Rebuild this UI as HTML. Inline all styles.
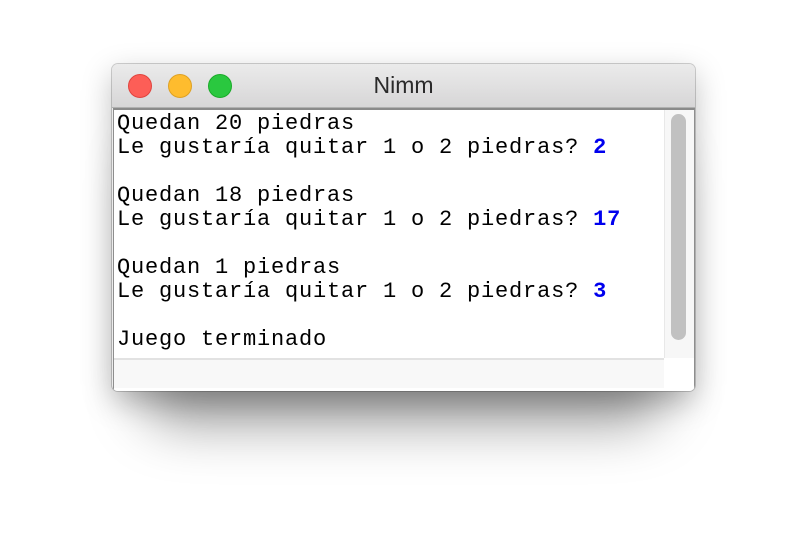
<!DOCTYPE html>
<html><head><style>
html,body{margin:0;padding:0;width:808px;height:552px;background:#fff;overflow:hidden}
.sh{position:absolute;left:150px;top:120px;width:507px;height:268px;border-radius:30px;box-shadow:0 28px 55px 8px rgba(0,0,0,.38);background:#888}
.win{position:absolute;left:112px;top:64px;width:583px;height:327px;border-radius:6px;background:#ececec;box-shadow:0 0 0 1px rgba(0,0,0,.18),0 10px 30px rgba(0,0,0,.25);overflow:hidden}
.tb{position:absolute;left:0;top:0;width:583px;height:43px;background:linear-gradient(#ebebeb,#d7d6d7);border-bottom:1px solid #b0b0b0}
.dot{position:absolute;top:10px;width:22px;height:22px;border-radius:50%}
.title{position:absolute;left:0;right:0;top:8px;text-align:center;font:23px "Liberation Sans",sans-serif;color:#2a2a2a}
.frame{position:absolute;left:1px;top:44px;width:580px;height:281px;background:#fff;border:1px solid #8e8e8e;border-top:2px solid #8a8a8a}
.txt{position:absolute;left:3px;top:2px;font:22px/24px "Liberation Mono",monospace;letter-spacing:0.8px;color:#000;white-space:pre}
.b{color:#0000ee;font-weight:bold}
.track{position:absolute;left:550px;top:0;width:29px;height:248px;background:#f7f7f7;border-left:1px solid #e8e8e8}
.thumb{position:absolute;left:6px;top:4px;width:15px;height:226px;border-radius:8px;background:#c1c1c1}
.hl{position:absolute;left:0;top:248px;width:550px;height:2px;background:#e2e2e2}
.bot{position:absolute;left:0;top:250px;width:550px;height:28px;background:#f8f8f8}
</style></head><body>
<div class="sh"></div>
<div class="win">
<div class="tb">
<div class="dot" style="left:16px;background:#fd5e57;border:1px solid #e0443e"></div>
<div class="dot" style="left:56px;background:#febc2e;border:1px solid #dea123"></div>
<div class="dot" style="left:96px;background:#2ac83f;border:1px solid #1aab29"></div>
<div class="title">Nimm</div>
</div>
<div class="frame">
<div class="txt">Quedan 20 piedras
Le gustaría quitar 1 o 2 piedras? <span class="b">2</span>

Quedan 18 piedras
Le gustaría quitar 1 o 2 piedras? <span class="b">17</span>

Quedan 1 piedras
Le gustaría quitar 1 o 2 piedras? <span class="b">3</span>

Juego terminado</div>
<div class="track"><div class="thumb"></div></div>
<div class="hl"></div>
<div class="bot"></div>
</div>
</div>
</body></html>
